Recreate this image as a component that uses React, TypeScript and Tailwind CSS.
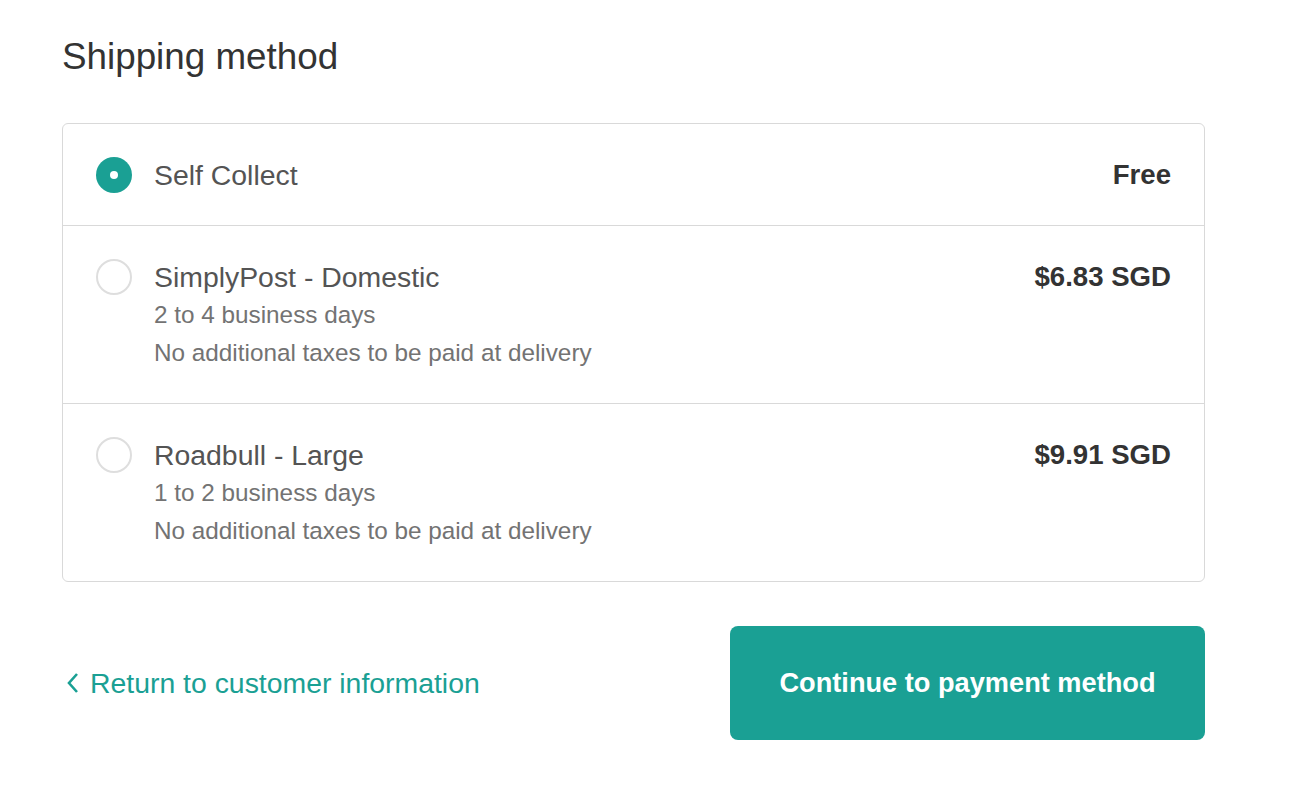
import React from 'react';

const options = [
  { name: 'Self Collect', price: 'Free', lines: [] as string[], selected: true },
  {
    name: 'SimplyPost - Domestic',
    price: '$6.83 SGD',
    lines: ['2 to 4 business days', 'No additional taxes to be paid at delivery'],
    selected: false,
  },
  {
    name: 'Roadbull - Large',
    price: '$9.91 SGD',
    lines: ['1 to 2 business days', 'No additional taxes to be paid at delivery'],
    selected: false,
  },
];

export default function App() {
  return (
    <div
      className="min-h-[792px] w-[1294px] bg-white pl-[62px] pt-[35px]"
      style={{ fontFamily: '"Liberation Sans", Arial, sans-serif' }}
    >
      <div className="w-[1143px]">
        <h2 className="text-[36.8px] leading-[44px] text-[#333333]">Shipping method</h2>

        <div className="mt-[44px] rounded-[6px] border border-[#d9d9d9]">
          {options.map((opt, i) => (
            <div
              key={opt.name}
              className={`flex items-start justify-between pl-[33px] pr-[33px] pt-[32px] pb-[31px] ${
                i > 0 ? 'border-t border-[#d9d9d9]' : ''
              }`}
            >
              <div className="flex items-start gap-[22px]">
                <div className="flex h-[38px] items-center">
                  {opt.selected ? (
                    <span className="flex h-[36px] w-[36px] items-center justify-center rounded-full bg-[#1aa094]">
                      <span className="h-[8px] w-[8px] rounded-full bg-white" />
                    </span>
                  ) : (
                    <span className="h-[36px] w-[36px] rounded-full border-2 border-[#dedede] bg-white" />
                  )}
                </div>
                <div>
                  <div className="text-[28.4px] leading-[38px] text-[#545454]">{opt.name}</div>
                  {opt.lines.map((l) => (
                    <div key={l} className="text-[24.3px] leading-[38px] text-[#737373]">
                      {l}
                    </div>
                  ))}
                </div>
              </div>
              <div className="text-[27.6px] font-bold leading-[38px] text-[#333333]">{opt.price}</div>
            </div>
          ))}
        </div>

        <div className="mt-[44px] flex items-center justify-between">
          <a className="flex items-center gap-[10px] text-[28.4px] text-[#1aa094]" href="#">
            <svg width="15" height="24" viewBox="0 0 15 24" fill="none" className="ml-[3px]">
              <path d="M12 3 L4 12 L12 21" stroke="#1aa094" strokeWidth="2.6" />
            </svg>
            Return to customer information
          </a>
          <button className="h-[114px] w-[475px] rounded-[8px] bg-[#1aa094] text-[27.2px] font-bold text-white">
            Continue to payment method
          </button>
        </div>
      </div>
    </div>
  );
}
